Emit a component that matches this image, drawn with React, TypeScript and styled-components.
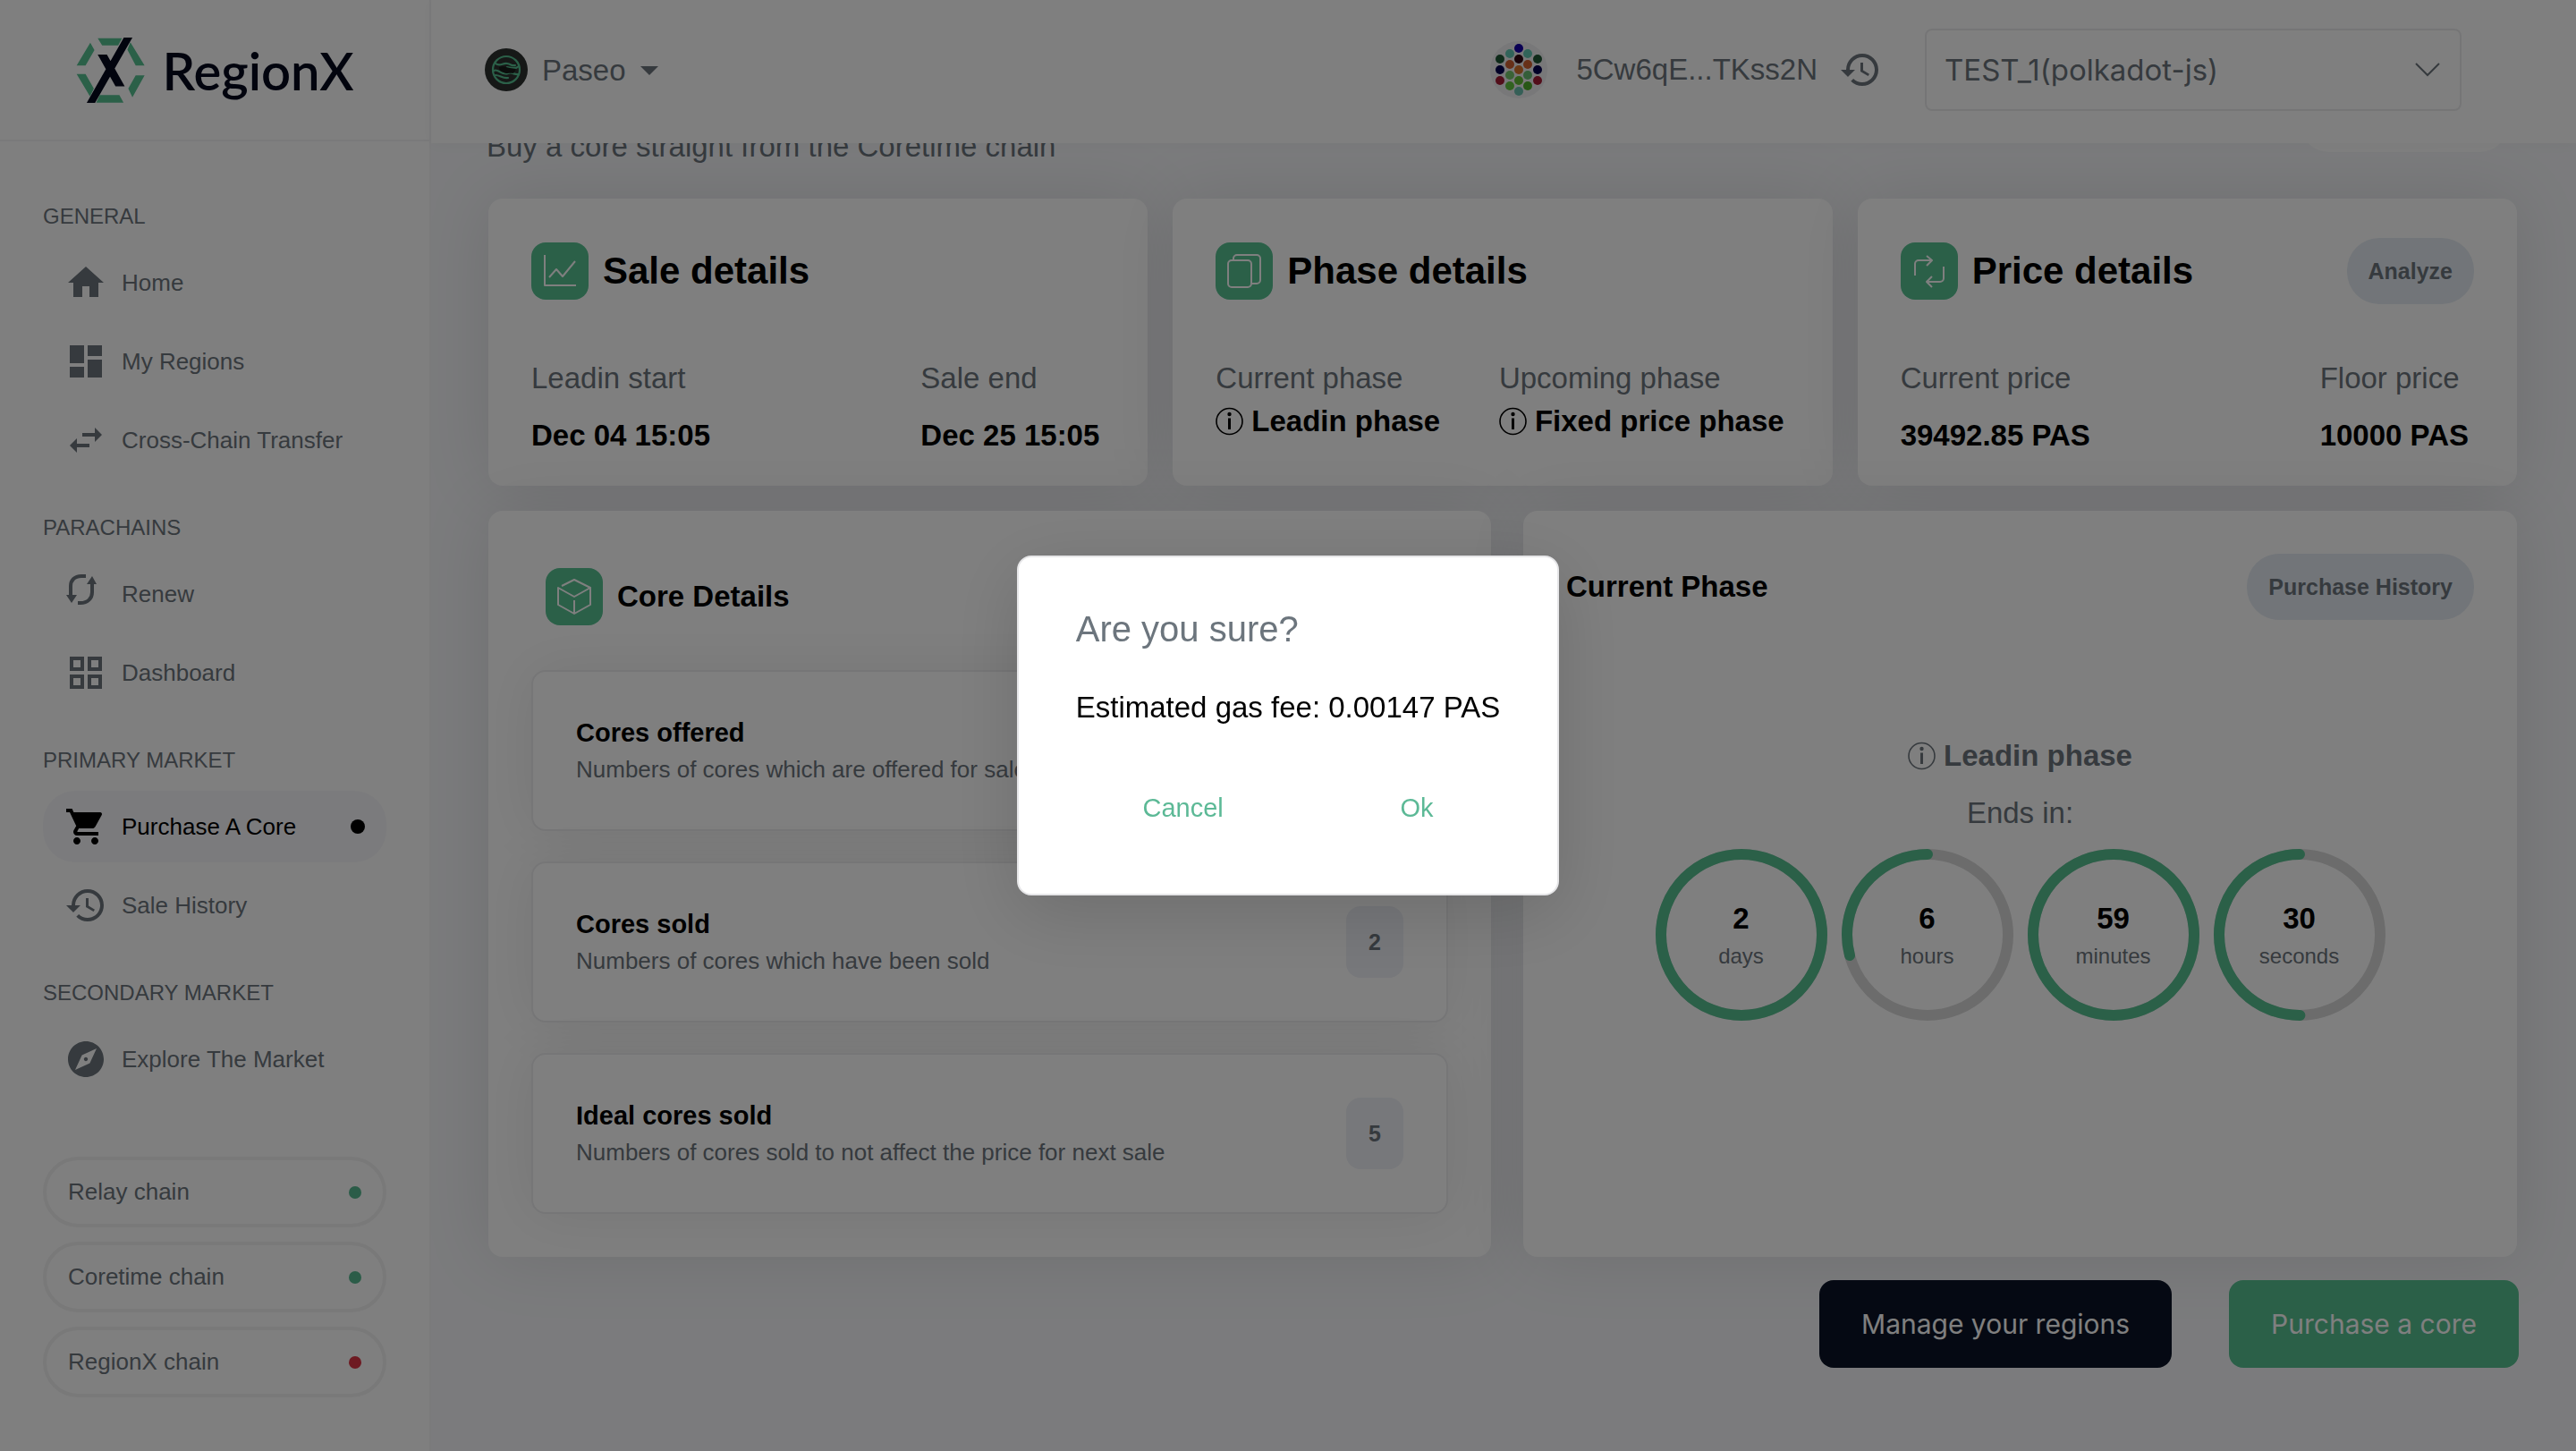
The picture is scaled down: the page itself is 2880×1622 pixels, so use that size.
import React from "react";
import styled, { createGlobalStyle } from "styled-components";
import {
  MdArrowDropDown,
  MdDashboard,
  MdExplore,
  MdHistory,
  MdHome,
  MdShoppingCart,
  MdSwapHoriz,
} from "react-icons/md";

const color = {
  text: "#6c757d",
  ink: "#000000",
  green: "#56c091",
  navy: "#0a1326",
  line: "#f4f4f6",
  page: "#f6f7fa",
};
const sans = `"Liberation Sans", Arial, sans-serif`;
const geometric = `Inter, "Open Sans", sans-serif`;

const GlobalStyle = createGlobalStyle`
  * { box-sizing: border-box; }
  body { margin: 0; background: ${color.page}; font-family: ${sans}; color: ${color.text}; }
  h1, h2, h3, p, ul, dl, dd { margin: 0; padding: 0; font-weight: 400; }
  ul { list-style: none; }
  button, select { font: inherit; color: inherit; border: 0; background: none; cursor: pointer; }
  svg { display: block; flex: none; }
`;

/* ---------- frame ---------- */
const Shell = styled.div`
  display: grid;
  grid-template-columns: 482px 1fr;
  height: 100vh;
`;
const Side = styled.aside`
  background: #fff;
  border-right: 2px solid ${color.line};
  display: flex;
  flex-direction: column;
`;
const Brand = styled.a`
  height: 158px;
  border-bottom: 2px solid ${color.line};
  display: flex;
  align-items: center;
  justify-content: center;
  gap: 20px;
  color: #04081c;
  text-decoration: none;
  font-family: Lato, sans-serif;
  font-weight: 600;
  font-size: 58px;
`;
const Nav = styled.nav`
  padding: 60px 48px 0;
  display: flex;
  flex-direction: column;
  gap: 34px;
`;
const NavTitle = styled.h3`
  font-size: 24px;
  line-height: 48px;
  margin-bottom: 10px;
`;
const NavList = styled.ul`
  display: flex;
  flex-direction: column;
  gap: 8px;
`;
const NavLink = styled.a<{ $active?: boolean }>`
  height: 80px;
  padding: 0 24px;
  border-radius: 36px;
  display: flex;
  align-items: center;
  gap: 16px;
  font-size: 26px;
  text-decoration: none;
  color: ${(p) => (p.$active ? color.ink : color.text)};
  background: ${(p) => (p.$active ? "#f7f7fa" : "transparent")};
`;
const Dot = styled.span<{ $size: number; $color: string }>`
  width: ${(p) => p.$size}px;
  height: ${(p) => p.$size}px;
  margin-left: auto;
  border-radius: 50%;
  background: ${(p) => p.$color};
`;
const Chains = styled.ul`
  margin-top: auto;
  padding: 0 48px 60px;
  display: flex;
  flex-direction: column;
  gap: 16px;
`;
const Chain = styled.li`
  height: 79px;
  padding: 0 24px;
  border: 4px solid #f2f2f3;
  border-radius: 40px;
  display: flex;
  align-items: center;
  font-size: 26px;
`;

const Main = styled.main`
  display: flex;
  flex-direction: column;
  min-width: 0;
`;
const TopBar = styled.header`
  height: 160px;
  flex: none;
  z-index: 1;
  padding: 0 128px 4px 60px;
  background: #fff;
  box-shadow: 0 0 16px rgba(0, 0, 0, 0.04);
  display: flex;
  align-items: center;
  font-size: 33px;
`;
const Network = styled.label`
  display: flex;
  align-items: center;
  gap: 16px;
`;
const Picker = styled.span`
  display: grid;
  align-items: center;
  & > * { grid-area: 1 / 1; }
  & > svg { justify-self: end; pointer-events: none; }
`;
const NetworkSelect = styled.select`
  appearance: none;
  padding: 8px 50px 8px 0;
`;
const Account = styled.div`
  margin-left: auto;
  display: flex;
  align-items: center;
`;
const Address = styled.span`
  margin: 0 24px 0 32px;
`;
const IconButton = styled.button`
  padding: 0;
  margin-right: 48px;
`;
const AccountPicker = styled(Picker)`
  & > svg { margin-right: 24px; }
`;
const AccountSelect = styled.select`
  appearance: none;
  width: 600px;
  height: 92px;
  padding: 0 20px;
  border: 2px solid #ebebed;
  border-radius: 8px;
  font-family: ${geometric};
  font-size: 33px;
  font-weight: 400;
`;

/* ---------- page ---------- */
const Scroller = styled.div`
  flex: 1;
  min-height: 0;
  overflow: hidden;
  padding: 0 64px 0 62px;
`;
const PageHead = styled.div`
  margin-top: -20px;
  margin-bottom: 34px;
  height: 48px;
  display: flex;
  justify-content: space-between;
  align-items: flex-end;
  font-size: 33px;
  line-height: 48px;
`;
const PagePill = styled.span`
  width: 232px;
  height: 80px;
  margin: 0 12px 18px 0;
  border-radius: 32px;
  background: #fff;
`;
const Board = styled.div`
  padding: 0 2px;
  display: grid;
  gap: 28px;
`;
const TopCards = styled.section`
  display: grid;
  grid-template-columns: repeat(3, 1fr);
  gap: 28px;
`;
const BottomCards = styled.section`
  display: grid;
  grid-template-columns: 1121fr 1111fr;
  gap: 36px;
`;
const Card = styled.article`
  background: #fff;
  border-radius: 16px;
  box-shadow: 0 0 80px rgba(0, 0, 0, 0.1);
`;
const DetailCard = styled(Card)`
  padding: 44px 48px 32px;
`;
const CardHead = styled.div<{ $inset?: number }>`
  min-height: 74px;
  padding: ${(p) => p.$inset ?? 0}px;
  display: flex;
  align-items: center;
  gap: 16px;
`;
const Tile = styled.span`
  width: 64px;
  height: 64px;
  border-radius: 16px;
  background: ${color.green};
  display: grid;
  place-items: center;
  color: #fff;
`;
const CardTitle = styled.h2<{ $size?: number }>`
  font-size: ${(p) => p.$size ?? 42}px;
  font-weight: 700;
  color: ${color.ink};
`;
const Pill = styled.button`
  margin-left: auto;
  height: 74px;
  padding: 0 24px;
  border-radius: 36px;
  background: #e4ebf2;
  font-size: 25px;
  font-weight: 700;
`;
const Facts = styled.dl`
  margin-top: 59px;
  padding-right: 6px;
  display: flex;
  justify-content: space-between;
  font-size: 33px;
  line-height: 48px;
`;
const Fact = styled.div<{ $gap: number }>`
  display: grid;
  align-content: start;
  gap: ${(p) => p.$gap}px;
  dd { font-weight: 700; color: ${color.ink}; }
`;
const WithIcon = styled.span`
  display: flex;
  align-items: center;
  gap: 9px;
`;
const CoreCard = styled(Card)`
  padding: 48px;
  display: flex;
  flex-direction: column;
  gap: 34px;
`;
const CoreItem = styled.div`
  height: 180px;
  padding: 0 48px;
  border: 2px solid #ececee;
  border-radius: 16px;
  background: #fff;
  box-shadow: 0 0 64px rgba(0, 0, 0, 0.08);
  display: flex;
  align-items: center;
  justify-content: space-between;
`;
const CoreName = styled.h3`
  font-size: 29px;
  line-height: 42px;
  font-weight: 700;
  color: ${color.ink};
`;
const CoreNote = styled.p`
  font-size: 26px;
  line-height: 40px;
`;
const Count = styled.span`
  width: 64px;
  height: 80px;
  border-radius: 16px;
  background: #eef0f6;
  display: grid;
  place-items: center;
  font-size: 25px;
  font-weight: 700;
`;
const PhaseCard = styled(Card)`
  padding: 48px;
`;
const Countdown = styled.div`
  margin-top: 128px;
  display: flex;
  flex-direction: column;
  align-items: center;
  gap: 16px;
  font-size: 33px;
  line-height: 48px;
`;
const PhaseName = styled(WithIcon)`
  font-weight: 700;
`;
const Rings = styled.div`
  display: flex;
  gap: 16px;
`;
const RingBox = styled.div`
  display: grid;
  place-items: center;
  & > * { grid-area: 1 / 1; }
`;
const RingText = styled.div`
  text-align: center;
  font-size: 24px;
  line-height: 36px;
  b { display: block; font-size: 33px; line-height: 48px; color: ${color.ink}; }
`;
const Actions = styled.div`
  margin-top: 26px;
  display: flex;
  justify-content: flex-end;
  gap: 64px;
`;
const ActionButton = styled.button<{ $bg: string }>`
  height: 98px;
  padding: 0 47px;
  border-radius: 16px;
  background: ${(p) => p.$bg};
  color: #fff;
  font-family: ${geometric};
  font-size: 30px;
`;

/* ---------- dialog ---------- */
const Backdrop = styled.div`
  position: fixed;
  inset: 0;
  z-index: 10;
  background: rgba(0, 0, 0, 0.5);
  display: grid;
  place-items: center;
`;
const Dialog = styled.div`
  min-width: 602px;
  padding: 48px 64px 56px;
  border: 2px solid #e6e6e8;
  border-radius: 16px;
  background: #fff;
  box-shadow: 0 20px 80px rgba(0, 0, 0, 0.14);
`;
const DialogTitle = styled.h2`
  font-size: 40px;
  line-height: 64px;
`;
const DialogText = styled.p`
  margin: 32px 0 48px;
  font-size: 33px;
  line-height: 48px;
  color: ${color.ink};
`;
const DialogActions = styled.div`
  display: flex;
  justify-content: space-around;
  gap: 48px;
`;
const TextButton = styled.button`
  height: 80px;
  padding: 0 32px;
  font-size: 29px;
  color: #5cb996;
`;

/* ---------- drawings ---------- */
const Logo = () => (
  <svg width="77" height="73" viewBox="0 0 232 220">
    <g fill={color.green}>
      <path d="M73 2h82l-13 24H88zM48 17l14 25-30 52H2zM2 123h30l28 49-13 26zM183 16l48 78h-30l-28-53zM201 127h30l-41 74-14-29zM80 194h66l14 25H68z" />
    </g>
    <path fill="#04081c" d="M161 0h29L64 220H36zM73 57h31l60 107h-31z" />
  </svg>
);
const PaseoLogo = () => (
  <svg width="48" height="48" viewBox="0 0 48 48">
    <circle cx="24" cy="24" r="24" fill="#2c302f" />
    <g fill="none" stroke={color.green} strokeWidth="2.2" strokeLinecap="round">
      <circle cx="24" cy="24" r="15" />
      <path d="M12 17c5 4 8-1 13 0s5 3 9 2M38 20c-4 4-9 2-13 1M10 25c5-3 9 6 16 3 4-2 8 2 11 1M12 30c5 0 8 4 14 3" />
    </g>
    <path d="M16 21c4-2 8 0 12 1l7 1-3 5c-4-1-7 1-11-1-3-1-5-2-5-6z" fill="#171a19" />
  </svg>
);
const identDots: [number, number, string][] = [
  [32, 8, "#1500a8"], [22, 14, "#63c8b4"], [42, 14, "#63c8b4"],
  [11, 20, "#1f5635"], [32, 20, "#300712"], [53, 20, "#1f5635"],
  [22, 26, "#cf6030"], [42, 26, "#cf6030"], [11, 32, "#02004f"],
  [32, 32, "#d7742c"], [53, 32, "#02004f"], [22, 38, "#75c66c"],
  [42, 38, "#69bd72"], [11, 44, "#a51c35"], [32, 44, "#63bb36"],
  [53, 44, "#a51c35"], [22, 50, "#63c540"], [42, 50, "#4fae2c"], [32, 56, "#6bbfae"],
];
const Identicon = () => (
  <svg width="64" height="64" viewBox="0 0 64 64">
    <circle cx="32" cy="32" r="32" fill="#f0f0f3" />
    {identDots.map(([x, y, fill]) => (
      <circle key={`${x}-${y}`} cx={x} cy={y} r="5" fill={fill} />
    ))}
  </svg>
);
const RenewIcon = () => (
  <svg width="48" height="48" viewBox="0 0 48 48" fill="currentColor">
    <path d="M24 5h-5C11 5 7 10 7 16v12M15 35h3c8 0 13-5 13-12V11" transform="translate(0 -1)" fill="none" stroke="currentColor" strokeWidth="4" />
    <path d="M2 25h12l-6 9zM25 13h11l-5-9z" />
  </svg>
);
const GridIcon = () => (
  <svg width="48" height="48" viewBox="0 0 48 48" fill="none" stroke="currentColor" strokeWidth="4">
    <path d="M8 8h12v12H8zM28 8h12v12H28zM8 28h12v12H8zM28 28h12v12H28z" />
  </svg>
);
const Chevron = () => (
  <svg width="28" height="28" viewBox="0 0 28 28" fill="none" stroke="currentColor" strokeWidth="2">
    <path d="M1 7l13 13L27 7" />
  </svg>
);
const InfoIcon = () => (
  <svg width="31" height="32" viewBox="0 0 31 32">
    <circle cx="15.5" cy="16" r="14.5" fill="none" stroke="currentColor" strokeWidth="1.6" />
    <circle cx="15.5" cy="8" r="2.2" fill="currentColor" />
    <path d="M15.5 12.5V25" stroke="currentColor" strokeWidth="3" />
  </svg>
);
const tilePaths = {
  chart: "M3 2v34h35M8 27l8-9 7 8 14-17",
  pages: "M6 8h18a4 4 0 0 1 4 4v22a4 4 0 0 1-4 4H6a4 4 0 0 1-4-4V12a4 4 0 0 1 4-4zM8 8V6a4 4 0 0 1 4-4h22a4 4 0 0 1 4 4v24a4 4 0 0 1-4 4h-6",
  swap: "M4 25V12a4 4 0 0 1 4-4h14M17 3l6 5-6 6M36 15v13a4 4 0 0 1-4 4H18M23 26l-6 6 6 6",
  cube: "M6 8l14-7 18 9-18 10L2 10v19l18 10 18-10V10M20 24v15",
};
const TileIcon = ({ name }: { name: keyof typeof tilePaths }) => (
  <Tile>
    <svg width="40" height="40" viewBox="0 0 40 40" fill="none" stroke="currentColor" strokeWidth="2" strokeLinejoin="round">
      <path d={tilePaths[name]} />
    </svg>
  </Tile>
);
const Ring = ({ value, unit, part }: { value: number; unit: string; part: number }) => {
  const r = 90;
  const length = 2 * Math.PI * r;
  return (
    <RingBox>
      <svg width="192" height="192" viewBox="0 0 192 192" fill="none" strokeWidth="12">
        <circle cx="96" cy="96" r={r} stroke="#d9d9d9" />
        <circle
          cx="96"
          cy="96"
          r={r}
          stroke={color.green}
          strokeLinecap="round"
          strokeDasharray={`${length * part} ${length}`}
          transform="matrix(0 -1 -1 0 192 192)"
        />
      </svg>
      <RingText>
        <b>{value}</b>
        {unit}
      </RingText>
    </RingBox>
  );
};

/* ---------- content ---------- */
const menu = [
  { title: "GENERAL", items: [
    { label: "Home", icon: <MdHome size={48} /> },
    { label: "My Regions", icon: <MdDashboard size={48} /> },
    { label: "Cross-Chain Transfer", icon: <MdSwapHoriz size={48} /> },
  ] },
  { title: "PARACHAINS", items: [
    { label: "Renew", icon: <RenewIcon /> },
    { label: "Dashboard", icon: <GridIcon /> },
  ] },
  { title: "PRIMARY MARKET", items: [
    { label: "Purchase A Core", icon: <MdShoppingCart size={48} />, active: true },
    { label: "Sale History", icon: <MdHistory size={48} /> },
  ] },
  { title: "SECONDARY MARKET", items: [
    { label: "Explore The Market", icon: <MdExplore size={48} /> },
  ] },
] as { title: string; items: { label: string; icon: React.ReactNode; active?: boolean }[] }[];

const chains = [
  { name: "Relay chain", color: "#56b890" },
  { name: "Coretime chain", color: "#56b890" },
  { name: "RegionX chain", color: "#dc3545" },
];
const cores = [
  { name: "Cores offered", note: "Numbers of cores which are offered for sale", count: 5 },
  { name: "Cores sold", note: "Numbers of cores which have been sold", count: 2 },
  { name: "Ideal cores sold", note: "Numbers of cores sold to not affect the price for next sale", count: 5 },
];

const Sidebar = () => (
  <Side>
    <Brand href="#">
      <Logo />
      RegionX
    </Brand>
    <Nav>
      {menu.map((group) => (
        <div key={group.title}>
          <NavTitle>{group.title}</NavTitle>
          <NavList>
            {group.items.map((item) => (
              <li key={item.label}>
                <NavLink href="#" $active={item.active}>
                  {item.icon}
                  {item.label}
                  {item.active && <Dot $size={16} $color={color.ink} />}
                </NavLink>
              </li>
            ))}
          </NavList>
        </div>
      ))}
    </Nav>
    <Chains>
      {chains.map((chain) => (
        <Chain key={chain.name}>
          {chain.name}
          <Dot $size={14} $color={chain.color} />
        </Chain>
      ))}
    </Chains>
  </Side>
);

const Header = () => (
  <TopBar>
    <Network>
      <PaseoLogo />
      <Picker>
        <NetworkSelect aria-label="Network">
          <option>Paseo</option>
        </NetworkSelect>
        <MdArrowDropDown size={48} />
      </Picker>
    </Network>
    <Account>
      <Identicon />
      <Address>5Cw6qE...TKss2N</Address>
      <IconButton aria-label="History">
        <MdHistory size={48} />
      </IconButton>
      <AccountPicker>
        <AccountSelect aria-label="Account">
          <option>TEST_1(polkadot-js)</option>
        </AccountSelect>
        <Chevron />
      </AccountPicker>
    </Account>
  </TopBar>
);

export default function App() {
  return (
    <>
      <GlobalStyle />
      <Shell>
        <Sidebar />
        <Main>
          <Header />
          <Scroller>
            <PageHead>
              <p>Buy a core straight from the Coretime chain</p>
              <PagePill />
            </PageHead>
            <Board>
              <TopCards>
                <DetailCard>
                  <CardHead>
                    <TileIcon name="chart" />
                    <CardTitle>Sale details</CardTitle>
                  </CardHead>
                  <Facts>
                    <Fact $gap={16}><dt>Leadin start</dt><dd>Dec 04 15:05</dd></Fact>
                    <Fact $gap={16}><dt>Sale end</dt><dd>Dec 25 15:05</dd></Fact>
                  </Facts>
                </DetailCard>
                <DetailCard>
                  <CardHead>
                    <TileIcon name="pages" />
                    <CardTitle>Phase details</CardTitle>
                  </CardHead>
                  <Facts>
                    <Fact $gap={0}>
                      <dt>Current phase</dt>
                      <dd><WithIcon><InfoIcon />Leadin phase</WithIcon></dd>
                    </Fact>
                    <Fact $gap={0}>
                      <dt>Upcoming phase</dt>
                      <dd><WithIcon><InfoIcon />Fixed price phase</WithIcon></dd>
                    </Fact>
                  </Facts>
                </DetailCard>
                <DetailCard>
                  <CardHead>
                    <TileIcon name="swap" />
                    <CardTitle>Price details</CardTitle>
                    <Pill>Analyze</Pill>
                  </CardHead>
                  <Facts>
                    <Fact $gap={16}><dt>Current price</dt><dd>39492.85 PAS</dd></Fact>
                    <Fact $gap={16}><dt>Floor price</dt><dd>10000 PAS</dd></Fact>
                  </Facts>
                </DetailCard>
              </TopCards>
              <BottomCards>
                <CoreCard>
                  <CardHead $inset={16}>
                    <TileIcon name="cube" />
                    <CardTitle $size={33}>Core Details</CardTitle>
                  </CardHead>
                  {cores.map((core) => (
                    <CoreItem key={core.name}>
                      <div>
                        <CoreName>{core.name}</CoreName>
                        <CoreNote>{core.note}</CoreNote>
                      </div>
                      <Count>{core.count}</Count>
                    </CoreItem>
                  ))}
                </CoreCard>
                <PhaseCard>
                  <CardHead>
                    <CardTitle $size={33}>Current Phase</CardTitle>
                    <Pill>Purchase History</Pill>
                  </CardHead>
                  <Countdown>
                    <PhaseName><InfoIcon />Leadin phase</PhaseName>
                    <p>Ends in:</p>
                    <Rings>
                      <Ring value={2} unit="days" part={1} />
                      <Ring value={6} unit="hours" part={0.291} />
                      <Ring value={59} unit="minutes" part={1} />
                      <Ring value={30} unit="seconds" part={0.5} />
                    </Rings>
                  </Countdown>
                </PhaseCard>
              </BottomCards>
            </Board>
            <Actions>
              <ActionButton $bg={color.navy}>Manage your regions</ActionButton>
              <ActionButton $bg={color.green}>Purchase a core</ActionButton>
            </Actions>
          </Scroller>
        </Main>
      </Shell>
      <Backdrop>
        <Dialog role="dialog" aria-modal="true" aria-labelledby="dialog-title">
          <DialogTitle id="dialog-title">Are you sure?</DialogTitle>
          <DialogText>Estimated gas fee: 0.00147 PAS</DialogText>
          <DialogActions>
            <TextButton>Cancel</TextButton>
            <TextButton>Ok</TextButton>
          </DialogActions>
        </Dialog>
      </Backdrop>
    </>
  );
}
